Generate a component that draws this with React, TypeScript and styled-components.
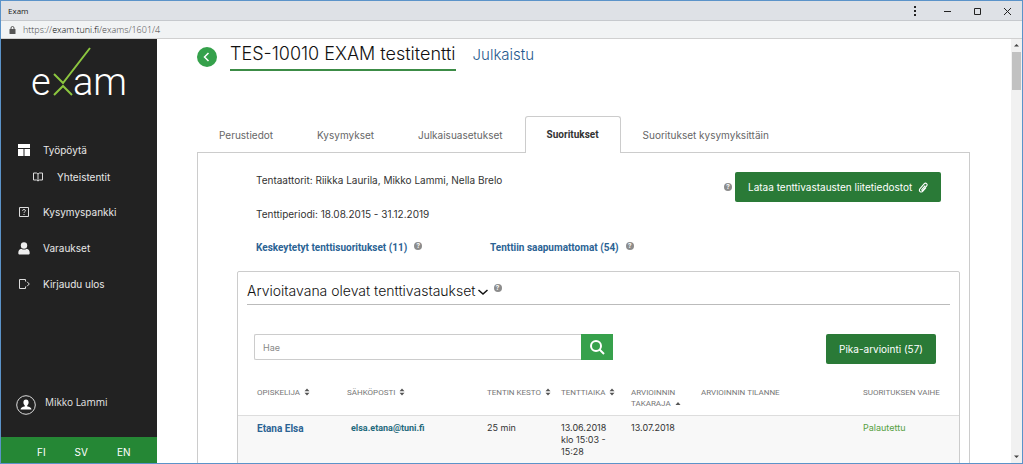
import React from 'react';
import styled, { createGlobalStyle, css } from 'styled-components';

const ui = `Inter, "Liberation Sans", sans-serif`;
const uiStrong = `Roboto, "Liberation Sans", sans-serif`;
const chrome = `"Open Sans", "Noto Sans", sans-serif`;

const Global = createGlobalStyle`
  *, *::before, *::after { box-sizing: border-box; }
  body { margin: 0; font-family: ${ui}; font-size: 10px; color: #333; background: #fff; }
  button, input { font: inherit; }
  button { cursor: pointer; }
  a { text-decoration: none; }
`;

const Window = styled.div`
  height: 100vh;
  display: flex;
  flex-direction: column;
  overflow: hidden;
  border: 1px solid #5b93c9;
`;

const TitleBar = styled.header`
  flex: none;
  height: 20px;
  padding: 0 9px 0 7px;
  display: flex;
  align-items: center;
  justify-content: space-between;
  background: #dee1e6;
  border-bottom: 1px solid #c6c9cd;
  font: 8px ${chrome};
  color: #222;
`;

const WindowButtons = styled.div`
  display: flex;
  gap: 18px;
`;

const WindowButton = styled.button`
  width: 12px;
  height: 12px;
  padding: 0;
  border: 0;
  background: none;
  color: #222;
  display: flex;
`;

const AddressBar = styled.div`
  flex: none;
  height: 18px;
  padding: 0 8px;
  display: flex;
  align-items: center;
  gap: 7px;
  background: #f1f3f4;
  border-bottom: 1px solid #d0d0d0;
  font: 300 9px ${chrome};
  color: #444;
`;

const Host = styled.span`
  color: #000;
`;

const Body = styled.div`
  flex: 1;
  min-height: 0;
  display: flex;
`;

const Sidebar = styled.aside`
  flex: none;
  width: 156px;
  display: flex;
  flex-direction: column;
  background: #222;
  color: #e8e8e8;
`;

const LogoLink = styled.a`
  display: block;
  padding: 5px 0 0 28px;
  height: 93px;
`;

const Logo = styled.svg`
  display: block;
  overflow: visible;
`;

const LogoText = styled.text`
  font: 300 38px Roboto, sans-serif;
  fill: #fff;
`;

const NavLink = styled.a<{ $sub?: boolean }>`
  height: ${p => (p.$sub ? 18 : 36)}px;
  margin-bottom: ${p => (p.$sub ? 8 : 0)}px;
  padding-left: ${p => (p.$sub ? 32 : 17)}px;
  display: flex;
  align-items: center;
  gap: ${p => (p.$sub ? 14 : 12)}px;
  color: #e8e8e8;
`;

const User = styled.div`
  margin-top: auto;
  padding: 0 0 22px 15px;
  display: flex;
  gap: 9px;
  font: 10px/14px ${chrome};
`;

const Languages = styled.div`
  height: 26px;
  padding: 4px 0 0 36px;
  display: flex;
  gap: 29px;
  background: #258735;
`;

const Language = styled.button`
  padding: 0;
  border: 0;
  background: none;
  color: #fff;
`;

const Main = styled.main`
  flex: 1;
  min-width: 0;
  padding: 0 41px 0 40px;
  overflow: hidden;
`;

const TitleRow = styled.div`
  display: flex;
  align-items: flex-start;
`;

const BackButton = styled.button`
  width: 20px;
  height: 20px;
  margin: 8px 13px 0 0;
  padding: 0;
  border: 0;
  border-radius: 50%;
  background: #35a14b;
`;

const Title = styled.h1`
  margin: 0 17px 0 0;
  padding-bottom: 1px;
  border-bottom: 2px solid #3c8c46;
  font-size: 18px;
  line-height: 29px;
  font-weight: 300;
  color: #111;
`;

const Status = styled.span`
  font-size: 15px;
  line-height: 31px;
  font-weight: 300;
  color: #1f5a8e;
`;

const Tabs = styled.nav`
  display: flex;
  margin-top: 45px;
`;

const Tab = styled.a<{ $active?: boolean }>`
  height: 37px;
  padding: 0 21px;
  border: 1px solid transparent;
  border-bottom: 0;
  line-height: 36px;
  white-space: nowrap;
  color: #666;
  ${p =>
    p.$active &&
    css`
      position: relative;
      z-index: 1;
      border-color: #ccc;
      border-radius: 3px 3px 0 0;
      background: #fff;
      font-family: ${uiStrong};
      font-weight: 700;
      color: #333;
    `}
`;

const Panel = styled.section`
  margin-top: -1px;
  padding: 10px 9px 0 39px;
  border: 1px solid #ccc;
`;

const Summary = styled.div`
  display: flex;
  justify-content: space-between;
  padding: 0 20px 0 19px;
`;

const Line = styled.p`
  margin: 0;
  line-height: 34px;
  display: flex;
`;

const LinkWithHelp = styled.span`
  min-width: 234px;
  display: flex;
  gap: 7px;
`;

const TextLink = styled.a<{ $small?: boolean }>`
  font-family: ${uiStrong};
  font-weight: 700;
  font-size: ${p => (p.$small ? 9 : 10)}px;
  color: ${p => (p.$small ? '#1f6a7c' : '#2b6394')};
`;

const HelpSlot = styled.span`
  padding-top: 11px;
  display: flex;
  align-items: flex-start;
`;

const Actions = styled.div`
  display: flex;
  align-items: center;
  gap: 3px;
  height: 30px;
  margin-top: 9px;
`;

const GreenButton = styled.button`
  height: 30px;
  padding: 0 13px;
  border: 0;
  border-radius: 2px;
  background: #2a7a37;
  color: #fff;
  display: flex;
  align-items: center;
  gap: 6px;
  white-space: nowrap;
`;

const HelpBadge = styled.span`
  flex: none;
  width: 8px;
  height: 8px;
  border-radius: 50%;
  background: #8c8c8c;
  color: #fff;
  font: 700 7px/8px ${uiStrong};
  text-align: center;
`;

const Card = styled.section`
  margin-top: 6px;
  border: 1px solid #ccc;
  border-radius: 2px 2px 0 0;
`;

const CardHeading = styled.h2`
  margin: 0 9px;
  padding-top: 6px;
  height: 33px;
  border-bottom: 1px solid #bbb;
  display: flex;
  align-items: flex-start;
  font-size: 14px;
  line-height: 26px;
  font-weight: 300;
  color: #111;
`;

const Chevron = styled.svg`
  margin: 10px 6px 0 2px;
`;

const HeadingHelp = styled.span`
  padding-top: 6px;
  display: flex;
`;

const Tools = styled.div`
  padding: 29px 23px 0 16px;
  display: flex;
  align-items: flex-start;
  justify-content: space-between;
`;

const Search = styled.form`
  display: flex;
  width: 359px;
  height: 26px;
`;

const SearchInput = styled.input`
  flex: 1;
  min-width: 0;
  padding: 0 8px;
  border: 1px solid #ccc;
  border-right: 0;
  border-radius: 2px 0 0 2px;
  font-size: 9px;
  &::placeholder { color: #888; opacity: 1; }
`;

const SearchButton = styled.button`
  width: 32px;
  padding: 0;
  border: 0;
  background: #37a14c;
  display: flex;
  align-items: center;
  justify-content: center;
`;

const Table = styled.table`
  width: 100%;
  margin-top: 23px;
  border-collapse: collapse;
  table-layout: fixed;
`;

const Th = styled.th<{ $w?: number; $first?: boolean }>`
  width: ${p => (p.$w ? `${p.$w}px` : 'auto')};
  padding: 0 0 6px ${p => (p.$first ? 19 : 0)}px;
  text-align: left;
  vertical-align: top;
  font: 400 8px/11px ${uiStrong};
  color: #777;
`;

const SortIcon = styled.svg`
  margin-left: 2px;
  vertical-align: -1px;
`;

const Row = styled.tr`
  height: 84px;
  border-top: 1px solid #ddd;
  background: #f8f8f8;
`;

const Td = styled.td<{ $first?: boolean; $indent?: boolean; $done?: boolean }>`
  padding: ${p => (p.$first ? 7 : 6)}px 0 0 ${p => (p.$first ? 19 : p.$indent ? 4 : 0)}px;
  vertical-align: top;
  font-size: 9px;
  line-height: 12px;
  color: ${p => (p.$done ? '#56a043' : '#333')};
`;

const ScrollTrack = styled.div`
  flex: none;
  width: 11px;
  display: flex;
  flex-direction: column;
  align-items: center;
  background: #f1f1f1;
`;

const ScrollThumb = styled.div`
  width: 9px;
  height: 38px;
  background: #c1c1c1;
`;

const ScrollArrow = styled.svg`
  flex: none;
  &:last-child { margin-top: auto; }
`;

const Help = () => <HelpBadge>?</HelpBadge>;

const Sort = ({ up }: { up?: boolean }) => (
  <SortIcon width="6" height="8" viewBox="0 0 6 8" fill="#555">
    {up ? <path d="M0.5 6 3 3l2.500 3z" /> : <path d="M0.500 3.300 3 0.500l2.500 2.800zM0.500 4.700 3 7.500l2.500-2.800z" />}
  </SortIcon>
);

export default function App() {
  return (
    <>
      <Global />
      <Window>
        <TitleBar>
          <span>Exam</span>
          <WindowButtons>
            <WindowButton aria-label="Menu">
              <svg width="12" height="12" fill="currentColor"><path d="M3 1h2v2H3zM3 5h2v2H3zM3 9h2v2H3z" /></svg>
            </WindowButton>
            <WindowButton aria-label="Minimize">
              <svg width="12" height="12"><path d="M3 6.500h7" stroke="currentColor" /></svg>
            </WindowButton>
            <WindowButton aria-label="Maximize">
              <svg width="12" height="12" fill="none"><path d="M3.500 3.500h6v6h-6z" stroke="currentColor" /></svg>
            </WindowButton>
            <WindowButton aria-label="Close">
              <svg width="12" height="12"><path d="M3 3l7 7M10 3l-7 7" stroke="currentColor" /></svg>
            </WindowButton>
          </WindowButtons>
        </TitleBar>
        <AddressBar>
          <svg width="7" height="8" viewBox="0 0 7 8">
            <rect x="0.500" y="3" width="6" height="5" rx="0.500" fill="#555" />
            <path d="M2 3.500V2a1.500 1.500 0 0 1 3 0v1.500" fill="none" stroke="#555" />
          </svg>
          <span>https://<Host>exam.tuni.fi</Host>/exams/1601/4</span>
        </AddressBar>
        <Body>
          <Sidebar>
            <LogoLink href="#" aria-label="exam">
              <Logo width="112" height="72" viewBox="0 0 112 72">
                <LogoText x="2" y="51">e</LogoText>
                <LogoText x="44" y="51">am</LogoText>
                <g fill="none" stroke="#8cc63f" strokeWidth="2">
                  <path d="M25 30l9 9L61 4" />
                  <path d="M25 51l9-9 9 9" />
                </g>
              </Logo>
            </LogoLink>
            <nav>
              <NavLink href="#">
                <svg width="13" height="12" fill="#fff"><path d="M0 0h12v4H0zM0 5h5.500v7H0zM6.500 5H12v7H6.500z" /></svg>
                Työpöytä
              </NavLink>
              <NavLink href="#" $sub>
                <svg width="10" height="10" viewBox="0 0 10 10" fill="none" stroke="#ddd">
                  <path d="M0.500 1h3L5 2l1.500-1h3v7h-3L5 9 3.500 8h-3zM5 2v7" />
                </svg>
                Yhteistentit
              </NavLink>
              <NavLink href="#">
                <svg width="13" height="12" viewBox="0 0 13 12" fill="none" stroke="#ddd">
                  <path d="M1.500 1.500h9v9h-9z" />
                  <path d="M4.500 4.700c0-1.600 3-1.600 3 0 0 1-1.500 1-1.500 2.100M6 8v1" />
                </svg>
                Kysymyspankki
              </NavLink>
              <NavLink href="#">
                <svg width="13" height="13" viewBox="0 0 13 13" fill="#eee">
                  <circle cx="6" cy="3.500" r="3.200" />
                  <path d="M0.300 11c0-3 1.200-4 3-4.300 1.600 1.200 3.800 1.200 5.400 0 1.800.3 3 1.300 3 4.300 0 1-.6 1.500-1.500 1.500H1.800c-.9 0-1.500-.5-1.500-1.500z" />
                </svg>
                Varaukset
              </NavLink>
              <NavLink href="#">
                <svg width="13" height="12" viewBox="0 0 13 12" fill="none" stroke="#ddd">
                  <path d="M7.500 3.500v-2h-6v9h6v-2M9 3.700 11.300 6 9 8.300" />
                </svg>
                Kirjaudu ulos
              </NavLink>
            </nav>
            <User>
              <svg width="20" height="20" viewBox="0 0 20 20">
                <circle cx="10" cy="10" r="9.300" fill="none" stroke="#ddd" />
                <path d="M10 4.500c-1.700 0-2.600 1.100-2.600 2.800 0 1.300.5 2.400 1.300 3v1.200c-2.500.4-3.900 1-4.200 3h11c-.3-2-1.700-2.600-4.200-3v-1.200c.8-.6 1.300-1.700 1.300-3 0-1.700-.9-2.800-2.600-2.800z" fill="#fff" />
              </svg>
              Mikko Lammi
            </User>
            <Languages>
              <Language>FI</Language>
              <Language>SV</Language>
              <Language>EN</Language>
            </Languages>
          </Sidebar>
          <Main>
            <TitleRow>
              <BackButton aria-label="Takaisin">
                <svg width="20" height="20" fill="none"><path d="M11.500 6l-4 4 4 4" stroke="#fff" strokeWidth="1.500" /></svg>
              </BackButton>
              <Title>TES-10010 EXAM testitentti</Title>
              <Status>Julkaistu</Status>
            </TitleRow>
            <Tabs>
              <Tab href="#">Perustiedot</Tab>
              <Tab href="#">Kysymykset</Tab>
              <Tab href="#">Julkaisuasetukset</Tab>
              <Tab href="#" $active>Suoritukset</Tab>
              <Tab href="#">Suoritukset kysymyksittäin</Tab>
            </Tabs>
            <Panel>
              <Summary>
                <div>
                  <Line>Tentaattorit: Riikka Laurila, Mikko Lammi, Nella Brelo</Line>
                  <Line>Tenttiperiodi: 18.08.2015 - 31.12.2019</Line>
                  <Line as="div">
                    <LinkWithHelp><TextLink href="#">Keskeytetyt tenttisuoritukset (11)</TextLink><HelpSlot><Help /></HelpSlot></LinkWithHelp>
                    <LinkWithHelp><TextLink href="#">Tenttiin saapumattomat (54)</TextLink><HelpSlot><Help /></HelpSlot></LinkWithHelp>
                  </Line>
                </div>
                <Actions>
                  <Help />
                  <GreenButton>
                    Lataa tenttivastausten liitetiedostot
                    <svg width="10" height="11" viewBox="0 0 9 10" fill="none" stroke="#fff">
                      <path d="M6.500 3.200 3.600 6.600c-.6.7.3 1.500.9.800l3.200-3.700C9.200 1.900 7 .1 5.500 1.800L1.800 6.100c-1.600 1.900.9 4.200 2.600 2.300l2.800-3.300" />
                    </svg>
                  </GreenButton>
                </Actions>
              </Summary>
              <Card>
                <CardHeading>
                  Arvioitavana olevat tenttivastaukset
                  <Chevron width="10" height="8" fill="none"><path d="M0.500 2 5 6l4.500-4" stroke="#111" strokeWidth="1.500" /></Chevron>
                  <HeadingHelp><Help /></HeadingHelp>
                </CardHeading>
                <Tools>
                  <Search>
                    <SearchInput type="text" placeholder="Hae" aria-label="Hae" />
                    <SearchButton type="button" aria-label="Hae">
                      <svg width="16" height="16" fill="none" stroke="#fff" strokeWidth="2">
                        <circle cx="7" cy="7" r="5" /><path d="M10.500 10.500l4.500 4.500" />
                      </svg>
                    </SearchButton>
                  </Search>
                  <GreenButton>Pika-arviointi (57)</GreenButton>
                </Tools>
                <Table>
                  <thead>
                    <tr>
                      <Th $w={109} $first>OPISKELIJA <Sort /></Th>
                      <Th $w={140}>SÄHKÖPOSTI <Sort /></Th>
                      <Th $w={74}>TENTIN KESTO <Sort /></Th>
                      <Th $w={70}>TENTTIAIKA <Sort /></Th>
                      <Th $w={70}>ARVIOINNIN<br />TAKARAJA <Sort up /></Th>
                      <Th>ARVIOINNIN TILANNE</Th>
                      <Th $w={96}>SUORITUKSEN VAIHE</Th>
                    </tr>
                  </thead>
                  <tbody>
                    <Row>
                      <Td $first><TextLink href="#">Etana Elsa</TextLink></Td>
                      <Td $indent><TextLink href="#" $small>elsa.etana@tuni.fi</TextLink></Td>
                      <Td>25 min</Td>
                      <Td>13.06.2018<br />klo 15:03 -<br />15:28</Td>
                      <Td>13.07.2018</Td>
                      <Td />
                      <Td $done>Palautettu</Td>
                    </Row>
                  </tbody>
                </Table>
              </Card>
            </Panel>
          </Main>
          <ScrollTrack aria-hidden="true">
            <ScrollArrow width="11" height="13" fill="#444"><path d="M3 7.500 5.500 5 8 7.500z" /></ScrollArrow>
            <ScrollThumb />
            <ScrollArrow width="11" height="13" fill="#444"><path d="M3 5.500 5.500 8 8 5.500z" /></ScrollArrow>
          </ScrollTrack>
        </Body>
      </Window>
    </>
  );
}
